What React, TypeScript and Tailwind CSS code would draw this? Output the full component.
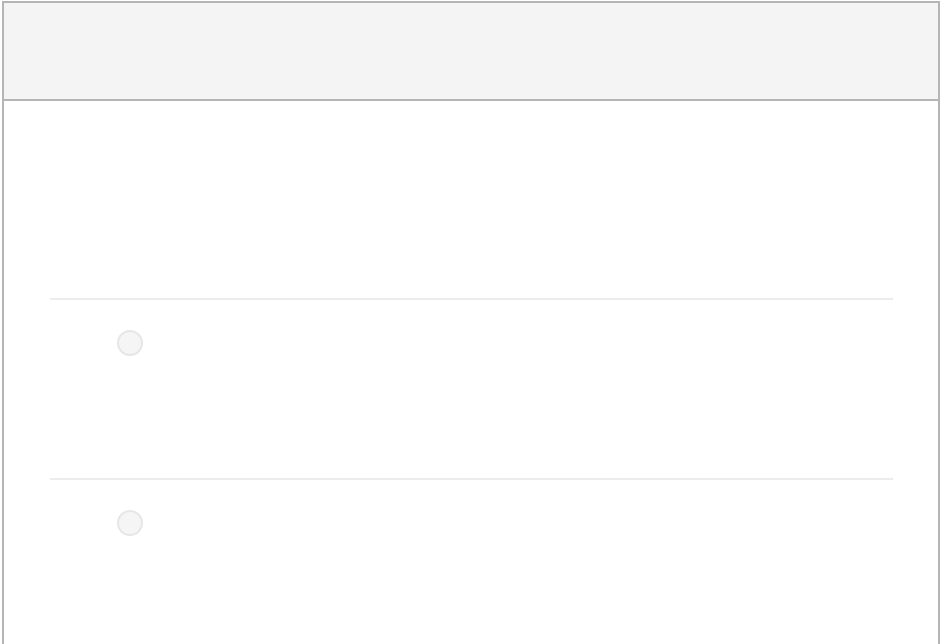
export default function App() {
  const rows = [0, 1];
  return (
    <div className="w-[944px] h-[644px] overflow-hidden bg-white font-['Liberation_Sans',sans-serif]">
      <div className="ml-[2px] mt-[1px] w-[938px] h-[700px] border-2 border-[#b5b5b5] flex flex-col">
        <div className="h-[98px] bg-[#f4f4f4] border-b-2 border-[#b5b5b5] shrink-0" />
        <div className="pl-[46px] pr-[45px] pt-[197px]">
          {rows.map((r) => (
            <div key={r} className="border-t-2 border-[#ececec] h-[180px] pl-[67px] pt-[30px]">
              <div className="w-[26px] h-[26px] rounded-full border-2 border-[#e6e6e6] bg-[#f5f5f5]" />
            </div>
          ))}
        </div>
      </div>
    </div>
  );
}
